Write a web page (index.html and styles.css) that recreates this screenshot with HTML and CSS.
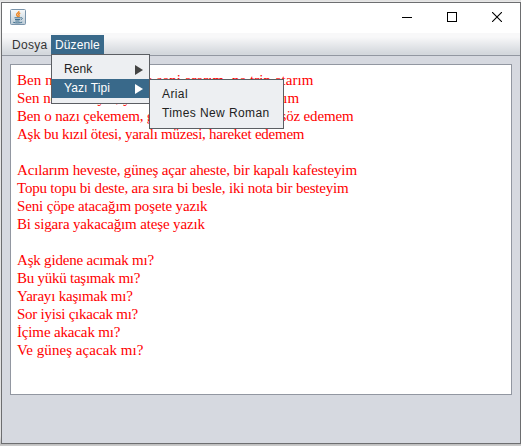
FILE: index.html
```html
<!DOCTYPE html>
<html lang="tr">
<head>
<meta charset="utf-8">
<title>Editör</title>
<link rel="stylesheet" href="styles.css">
</head>
<body>
<div class="window">
  <header class="titlebar">
    <svg class="logo" width="16" height="16" viewBox="0 0 16 16">
      <defs><linearGradient id="g" x2="0" y2="1"><stop stop-color="#f8fafb"/><stop offset="1" stop-color="#bccbd6"/></linearGradient></defs>
      <rect x=".5" y=".5" width="15" height="15" rx="1" fill="url(#g)" stroke="#7a94ab"/>
      <path d="M8.800 2c.6 1.700-2.600 2.300-2.200 3.800.2.800 1 1.200 1.200 2.200M10.200 4c-1.500.7-2 1.300-1.200 2.200.4.500.2 1.200-.3 1.700" fill="none" stroke="#ee8a2b" stroke-width="1.400"/>
      <path d="M4.500 8.800h6M5 10.500h5M5.300 12h4.200M10.500 8.800c2.400-.7 2.300 1.500.2 2M3.200 13.300c2.500.9 7 .8 9-.2" fill="none" stroke="#41708f" stroke-width="1"/>
    </svg>
    <div class="controls">
      <svg width="10" height="10" shape-rendering="crispEdges"><path d="M0 5.500h10" stroke="#000"/></svg>
      <svg width="10" height="10" shape-rendering="crispEdges"><path d="M.5.500h9v9h-9z" fill="none" stroke="#000"/></svg>
      <svg width="10" height="10"><path d="M0 0l10 10M10 0L0 10" stroke="#000" stroke-width="1.100"/></svg>
    </div>
  </header>
  <nav class="menubar">
    <span class="menu">Dosya</span>
    <div class="menu active">Düzenle
      <div class="popup main">
        <div class="item">Renk<i class="arrow"></i></div>
        <div class="item selected">Yazı Tipi<i class="arrow"></i>
          <div class="popup sub">
            <div class="item">Arial</div>
            <div class="item">Times New Roman</div>
          </div>
        </div>
      </div>
    </div>
  </nav>
  <main class="content">
<pre class="editor"><span class="loose">Ben nazını çekerim de seni ararım, ne trip atarım</span>
<span class="normal">Sen neden böyle, yine de ben seni sorar, ararım</span>
<span class="close">Ben o nazı çekemem, geri dönüp de sana bir söz edemem</span>
<span class="tight">Aşk bu kızıl ötesi, yaralı müzesi, hareket edemem</span>

<span class="close">Acılarım heveste, güneş açar aheste, bir kapalı kafesteyim</span>
<span class="snug">Topu topu bi deste, ara sıra bi besle, iki nota bir besteyim</span>
<span class="close">Seni çöpe atacağım poşete yazık</span>
<span class="close">Bi sigara yakacağım ateşe yazık</span>

<span class="snug">Aşk gidene acımak mı?</span>
<span class="tight">Bu yükü taşımak mı?</span>
<span class="snug">Yarayı kaşımak mı?</span>
<span class="tight">Sor iyisi çıkacak mı?</span>
<span class="close">İçime akacak mı?</span>
<span class="loose">Ve güneş açacak mı?</span></pre>
  </main>
</div>
</body>
</html>
```
FILE: styles.css
```css
* { box-sizing: border-box; }
body {
  margin: 0;
  height: 446px;
  padding: 2px 0 2px 1px;
  overflow: hidden;
  background: linear-gradient(#dedede, #eaeaea 2px, #e2e2e2 436px, #bcbcbc 444px, #cfcfcf);
  font: 12px/19px "Liberation Sans", Arial, sans-serif;
  color: #333;
}
.window {
  height: 442px;
  display: flex;
  flex-direction: column;
  border: 1px solid #6d6e70;
  background: #d6d9e0;
}
.titlebar {
  height: 30px;
  flex: none;
  display: flex;
  justify-content: space-between;
  padding: 6px 18px 0 8px;
  background: #fff;
}
.controls { display: flex; gap: 35px; padding-top: 3px; }
.menubar {
  height: 23px;
  flex: none;
  display: flex;
  padding: 2px 0 1px 5px;
  background: linear-gradient(#f8f8f9, #f8f8f9 4px, #d4d8dd 20px);
  border-bottom: 1px solid #9297a1;
}
.menu { position: relative; width: 44px; padding: 0 0 0 5px; line-height: 20px; letter-spacing: .3px; }
.active { width: 53px; height: 20px; padding: 0 4px; color: #fff; background: #39698a; letter-spacing: .1px; }
.popup {
  position: absolute;
  border: 1px solid #5b5e63;
  background: #edeff2;
  color: #222;
  z-index: 1;
}
.main { left: 0; top: 19px; width: 99px; height: 50px; padding: 5px 0; }
.sub { left: 97px; top: 0; width: 135px; height: 50px; padding: 5px 0; letter-spacing: .4px; }
.item {
  position: relative;
  display: flex;
  align-items: center;
  justify-content: space-between;
  height: 19px;
  padding: 0 6px 0 12px;
  line-height: 21px;
}
.selected { background: #39698a; color: #fff; }
.arrow {
  border: 5px solid transparent;
  border-left: 8px solid #444;
  border-right: 0;
}
.selected .arrow { border-left-color: #fff; }
.content { padding: 8px 8px 0; }
.editor {
  width: 502px;
  height: 331px;
  margin: 0;
  padding: 6px;
  border: 1px solid #9297a1;
  background: #fff;
  color: #f00;
  font: 15px/18px "Liberation Serif", "Times New Roman", serif;
}
.loose { letter-spacing: .06px; }
.normal { letter-spacing: -.03px; }
.close { letter-spacing: -.15px; }
.snug { letter-spacing: -.2px; }
.tight { letter-spacing: -.25px; }
```
